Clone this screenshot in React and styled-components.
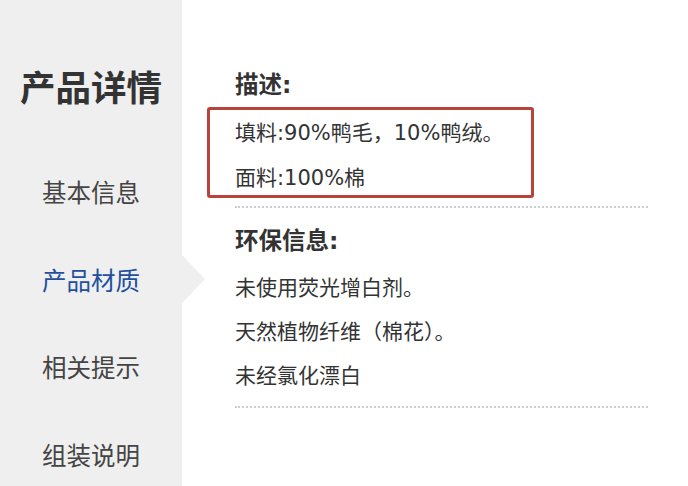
import styled, { createGlobalStyle } from "styled-components";

const GlobalStyle = createGlobalStyle`
  html, body {
    margin: 0;
    padding: 0;
    background: #ffffff;
  }
  body {
    font-family: "DejaVu Sans", "Noto Sans CJK SC", sans-serif;
    color: #333333;
  }
`;

const Page = styled.div`
  display: flex;
  width: 688px;
  height: 486px;
  overflow: hidden;
`;

const Sidebar = styled.nav`
  width: 182px;
  flex-shrink: 0;
  background: #f0efef;
  display: flex;
  flex-direction: column;
  align-items: center;
  padding-top: 66px;
  box-sizing: border-box;
`;

const SideTitle = styled.h1`
  margin: 0 0 36px;
  font-size: 35.5px;
  line-height: 46px;
  font-weight: 700;
  color: #333333;
`;

const NavItem = styled.div`
  position: relative;
  width: 100%;
  height: 87.6px;
  flex-shrink: 0;
  display: flex;
  align-items: center;
  justify-content: center;
  font-size: 24.5px;
  color: ${(p) => (p.$active ? "#22509e" : "#444444")};

  ${(p) =>
    p.$active &&
    `
    &::after {
      content: "";
      position: absolute;
      right: -23px;
      top: 50%;
      transform: translateY(-50%);
      border-top: 24px solid transparent;
      border-bottom: 24px solid transparent;
      border-left: 23px solid #f0efef;
    }
  `}
`;

const Content = styled.main`
  flex: 1;
  padding: 68px 40px 0 25px;
  display: flex;
  flex-direction: column;
`;

const Heading = styled.h2`
  margin: ${(p) => p.$m || "0 0 0 28px"};
  font-size: 23.5px;
  line-height: 34px;
  font-weight: 700;
  color: #333333;
`;

const HighlightBox = styled.div`
  border: 3px solid #b8433a;
  border-radius: 3px;
  width: 327px;
  height: 91px;
  box-sizing: border-box;
  padding: 1px 0 0 25px;
  margin-top: 5px;
`;

const Line = styled.p`
  margin: 0;
  font-size: 21px;
  line-height: ${(p) => p.$lh || "44px"};
  color: #333333;
  white-space: nowrap;
`;

const Lines = styled.div`
  padding-left: 28px;
  margin-top: 8px;
`;

const Divider = styled.div`
  margin: ${(p) => p.$m || "8px 0 0 28px"};
  border-top: 2px dotted #cccccc;
`;

export default function App() {
  return (
    <>
      <GlobalStyle />
      <Page>
        <Sidebar>
          <SideTitle>产品详情</SideTitle>
          <NavItem>基本信息</NavItem>
          <NavItem $active>产品材质</NavItem>
          <NavItem>相关提示</NavItem>
          <NavItem>组装说明</NavItem>
        </Sidebar>
        <Content>
          <Heading>描述:</Heading>
          <HighlightBox>
            <Line $lh="45px">填料:90%鸭毛，10%鸭绒。</Line>
            <Line $lh="45px">面料:100%棉</Line>
          </HighlightBox>
          <Divider />
          <Heading $m="16px 0 0 28px">环保信息:</Heading>
          <Lines>
            <Line>未使用荧光增白剂。</Line>
            <Line>天然植物纤维（棉花）。</Line>
            <Line>未经氯化漂白</Line>
          </Lines>
          <Divider $m="8px 0 0 28px" />
        </Content>
      </Page>
    </>
  );
}
